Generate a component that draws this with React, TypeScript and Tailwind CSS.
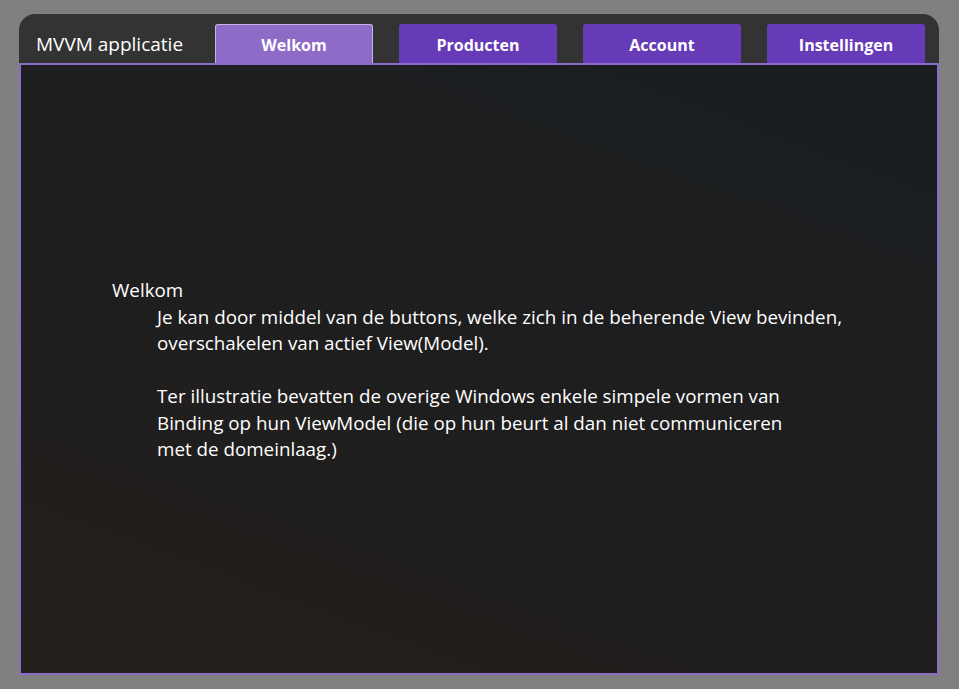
import React, { useState } from 'react';

const tabs = ['Welkom', 'Producten', 'Account', 'Instellingen'];

export default function App() {
  const [active, setActive] = useState('Welkom');

  return (
    <div className="min-h-screen bg-[#808080] pt-[14px] pl-[19px] font-['Open_Sans','Segoe_UI',sans-serif]">
      <div className="w-[920px] rounded-t-[16px] bg-[#333333]">
        {/* Header met titel en knoppen */}
        <div className="flex items-center pt-[10px] pl-[17px]">
          <div className="w-[179px] pt-[1px] text-[19px] text-white">MVVM applicatie</div>
          <div className="flex gap-[26px]">
            {tabs.map(t => (
              <button
                key={t}
                onClick={() => setActive(t)}
                className={`h-[39px] w-[158px] rounded-t-[3px] pt-[2px] text-[16px] font-bold text-white ${
                  active === t ? 'border border-b-0 border-[#c4b5e3] bg-[#8e6bc6]' : 'bg-[#673ab7]'
                }`}
              >
                {t}
              </button>
            ))}
          </div>
        </div>
        {/* Actieve View */}
        <div className="flex h-[612px] items-center border-2 border-[#8a6cc7] bg-[linear-gradient(200deg,#1a1e21_0%,#1e1e1f_45%,#231f1b_100%)] pl-[91px]">
          <div className="pt-[2px] text-[18.8px] leading-[26.5px] text-white">
            <div>Welkom</div>
            <div className="pl-[45px]">
              <div>Je kan door middel van de buttons, welke zich in de beherende View bevinden,</div>
              <div>overschakelen van actief View(Model).</div>
              <div>&nbsp;</div>
              <div>Ter illustratie bevatten de overige Windows enkele simpele vormen van</div>
              <div>Binding op hun ViewModel (die op hun beurt al dan niet communiceren</div>
              <div>met de domeinlaag.)</div>
            </div>
          </div>
        </div>
      </div>
    </div>
  );
}
